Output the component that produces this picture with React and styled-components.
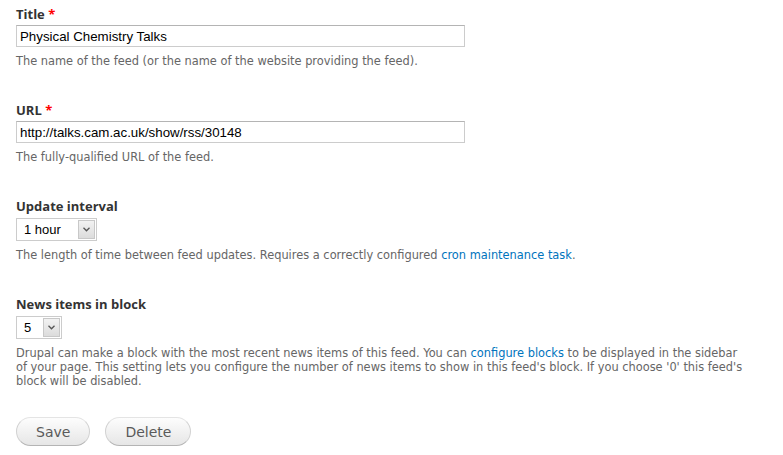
import React from "react";
import styled, { createGlobalStyle } from "styled-components";

const Global = createGlobalStyle`
  html, body { margin: 0; padding: 0; background: #fff; }
  body { font-family: "DejaVu Sans", Verdana, sans-serif; color: #333; }
`;

const Page = styled.form`
  padding: 5px 16px 0 16px;
  width: 750px;
`;

const FormItem = styled.div`
  margin-bottom: ${(p) => p.$mb ?? 33}px;
`;

const Label = styled.label`
  display: block;
  font-family: "Open Sans", "DejaVu Sans", sans-serif;
  font-weight: 700;
  font-size: 13px;
  line-height: 18px;
  color: #333;
`;

const Required = styled.span`
  color: #f00;
`;

const TextInput = styled.input`
  display: block;
  box-sizing: border-box;
  margin: 2px 0 0 0;
  width: 449px;
  height: 22px;
  padding: 1px 3px 0 3px;
  border: 1px solid #ccc;
  border-top-color: #b4b4b4;
  font-family: "Liberation Sans", Arial, sans-serif;
  font-size: 13.3px;
  color: #000;
  outline: none;
`;

const Select = styled.div`
  display: flex;
  box-sizing: border-box;
  margin-top: 3px;
  width: ${(p) => p.$w}px;
  height: 23px;
  border: 1px solid #ccc;
  background: #fff;
`;

const SelectValue = styled.span`
  flex: 1;
  padding-left: 7px;
  font-family: "Liberation Sans", Arial, sans-serif;
  font-size: 13px;
  line-height: 21px;
  color: #000;
`;

const Arrow = styled.span`
  width: 17px;
  margin: 1px;
  box-sizing: border-box;
  border: 1px solid #c8c8c8;
  background: linear-gradient(#f2f2f2, #dcdcdc);
  display: flex;
  align-items: center;
  justify-content: center;
`;

const Desc = styled.div`
  margin-top: 7px;
  font-size: 11.4px;
  line-height: 14px;
  color: #666;
`;

const Link = styled.a`
  color: #0074bd;
  text-decoration: none;
`;

const Actions = styled.div`
  display: flex;
  gap: 15px;
`;

const Button = styled.button`
  box-sizing: border-box;
  height: 29px;
  padding: 0 ${(p) => p.$px}px;
  border: 1px solid #e4e4e4;
  border-bottom-color: #b4b4b4;
  border-left-color: #d2d2d2;
  border-right-color: #d2d2d2;
  border-radius: 20px;
  background: linear-gradient(#fdfdfd, #e6e6e6);
  font-family: "DejaVu Sans", Verdana, sans-serif;
  font-size: 14px;
  color: #5a5a5a;
  cursor: pointer;
`;

const Chevron = () => (
  <svg width="7" height="5" viewBox="0 0 7 5">
    <path d="M0.5 0.8 L3.5 3.8 L6.5 0.8" fill="none" stroke="#555" strokeWidth="1.3" />
  </svg>
);

export default function App() {
  return (
    <>
      <Global />
      <Page onSubmit={(e) => e.preventDefault()}>
        <FormItem>
          <Label>Title <Required>*</Required></Label>
          <TextInput defaultValue="Physical Chemistry Talks" />
          <Desc>The name of the feed (or the name of the website providing the feed).</Desc>
        </FormItem>
        <FormItem>
          <Label>URL <Required>*</Required></Label>
          <TextInput defaultValue="http://talks.cam.ac.uk/show/rss/30148" />
          <Desc>The fully-qualified URL of the feed.</Desc>
        </FormItem>
        <FormItem>
          <Label>Update interval</Label>
          <Select $w={81}>
            <SelectValue>1 hour</SelectValue>
            <Arrow><Chevron /></Arrow>
          </Select>
          <Desc>
            The length of time between feed updates. Requires a correctly configured{" "}
            <Link href="#">cron maintenance task</Link>.
          </Desc>
        </FormItem>
        <FormItem $mb={29}>
          <Label>News items in block</Label>
          <Select $w={46}>
            <SelectValue>5</SelectValue>
            <Arrow><Chevron /></Arrow>
          </Select>
          <Desc>
            Drupal can make a block with the most recent news items of this feed. You can{" "}
            <Link href="#">configure blocks</Link> to be displayed in the sidebar
            <br />
            of your page. This setting lets you configure the number of news items to show in
            this feed's block. If you choose '0' this feed's block will be disabled.
          </Desc>
        </FormItem>
        <Actions>
          <Button $px={19}>Save</Button>
          <Button $px={19}>Delete</Button>
        </Actions>
      </Page>
    </>
  );
}
